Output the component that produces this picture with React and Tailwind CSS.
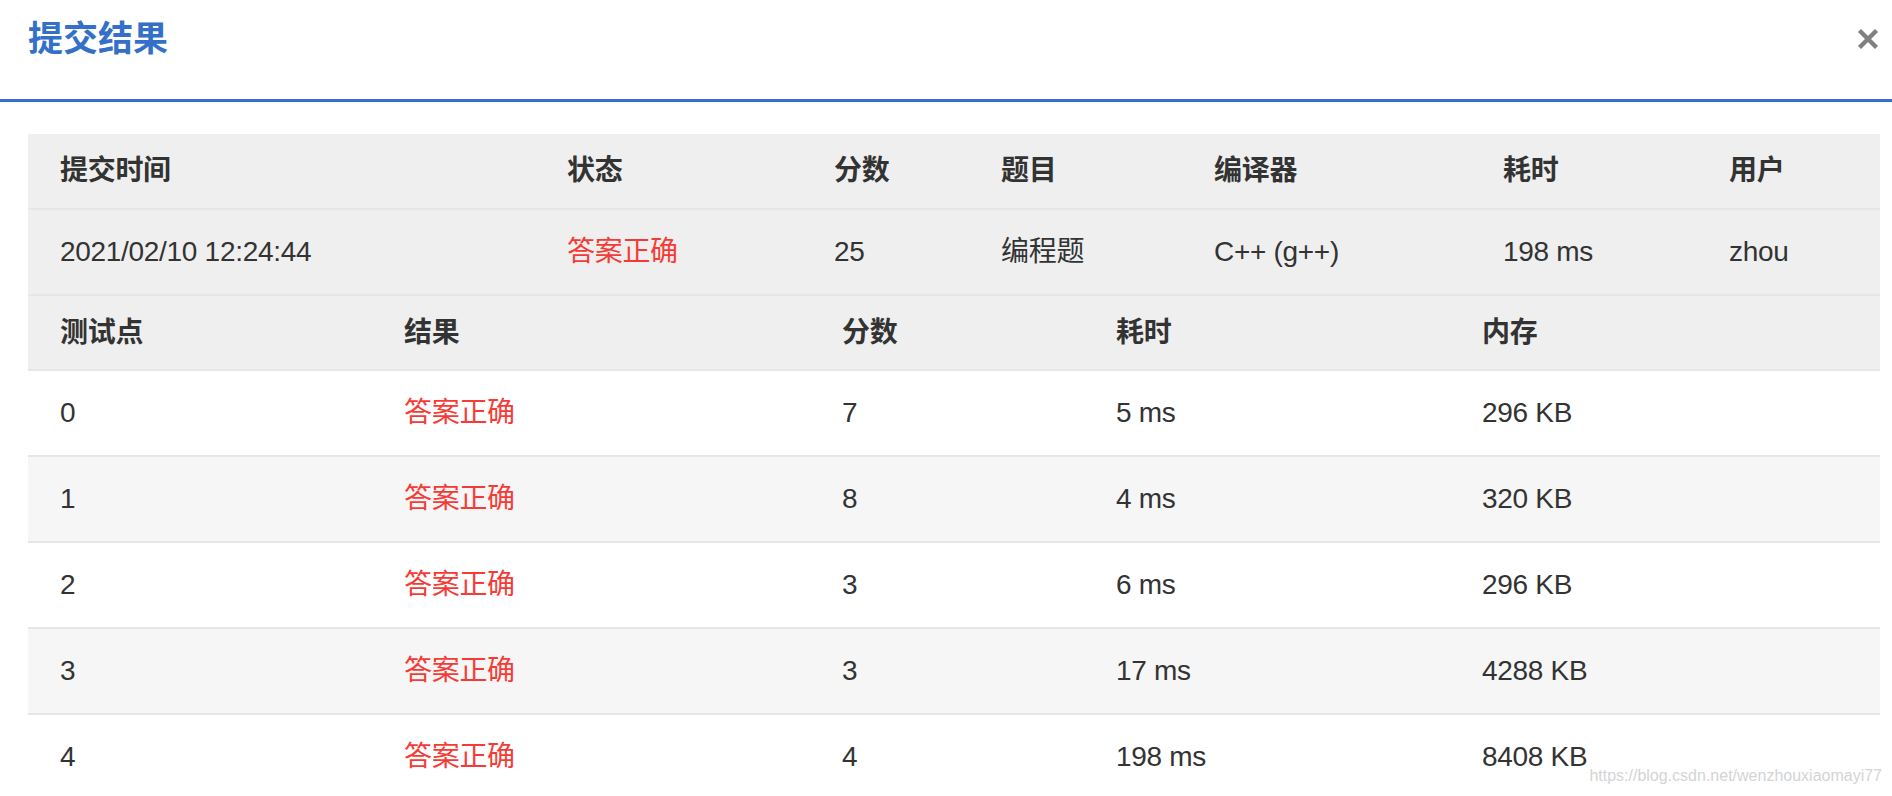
const summary = {
  submittedAt: '2021/02/10 12:24:44',
  status: '答案正确',
  score: 25,
  problem: '编程题',
  compiler: 'C++ (g++)',
  time: '198 ms',
  user: 'zhou',
};

const cases = [
  { id: 0, result: '答案正确', score: 7, time: '5 ms', memory: '296 KB' },
  { id: 1, result: '答案正确', score: 8, time: '4 ms', memory: '320 KB' },
  { id: 2, result: '答案正确', score: 3, time: '6 ms', memory: '296 KB' },
  { id: 3, result: '答案正确', score: 3, time: '17 ms', memory: '4288 KB' },
  { id: 4, result: '答案正确', score: 4, time: '198 ms', memory: '8408 KB' },
];

const topCols = 'grid grid-cols-[507px_267px_167px_213px_289px_226px_1fr] items-center';
const caseCols = 'grid grid-cols-[344px_438px_274px_366px_1fr] items-center';

const App = () => {
  return (
    <div
      className="relative h-[796px] overflow-hidden bg-white text-[#333]"
      style={{ fontFamily: '"Liberation Sans", "Noto Sans CJK SC", sans-serif' }}
    >
      {/* Header */}
      <div className="flex h-[99px] items-start justify-between pl-[28px] pr-[13px]">
        <h1 className="pt-[21px] text-[35px] font-bold leading-[35px] text-[#3470c8]">提交结果</h1>
        <button className="mt-[28px] text-[#808080]" aria-label="关闭">
          <svg width="22" height="22" viewBox="0 0 22 22">
            <path d="M2.5 2.5 L19.5 19.5 M19.5 2.5 L2.5 19.5" stroke="currentColor" strokeWidth="4.5" />
          </svg>
        </button>
      </div>
      <div className="h-[3px] bg-[#3470c8]" />

      {/* Result table */}
      <div className="ml-[28px] mt-[32px] w-[1852px] text-[28px] leading-[28px] tracking-[-0.3px]">
        <div className={`${topCols} h-[76px] border-b-2 border-[#e6e6e6] bg-[#efefef] font-bold`}>
          <div className="pl-[32px]">提交时间</div>
          <div className="pl-[32px]">状态</div>
          <div className="pl-[32px]">分数</div>
          <div className="pl-[32px]">题目</div>
          <div className="pl-[32px]">编译器</div>
          <div className="pl-[32px]">耗时</div>
          <div className="pl-[32px]">用户</div>
        </div>
        <div className={`${topCols} h-[86px] border-b-2 border-[#e6e6e6] bg-[#efefef]`}>
          <div className="pl-[32px]">{summary.submittedAt}</div>
          <div className="pl-[32px] text-[#f53b36]">{summary.status}</div>
          <div className="pl-[32px]">{summary.score}</div>
          <div className="pl-[32px]">{summary.problem}</div>
          <div className="pl-[32px]">{summary.compiler}</div>
          <div className="pl-[32px]">{summary.time}</div>
          <div className="pl-[32px]">{summary.user}</div>
        </div>
        <div className={`${caseCols} h-[75px] border-b-2 border-[#e6e6e6] bg-[#efefef] font-bold`}>
          <div className="pl-[32px]">测试点</div>
          <div className="pl-[32px]">结果</div>
          <div className="pl-[32px]">分数</div>
          <div className="pl-[32px]">耗时</div>
          <div className="pl-[32px]">内存</div>
        </div>
        {cases.map((c, i) => (
          <div
            key={c.id}
            className={`${caseCols} h-[86px] border-b-2 border-[#e6e6e6] ${i % 2 === 1 ? 'bg-[#f6f6f6]' : 'bg-white'}`}
          >
            <div className="pl-[32px]">{c.id}</div>
            <div className="pl-[32px] text-[#f53b36]">{c.result}</div>
            <div className="pl-[32px]">{c.score}</div>
            <div className="pl-[32px]">{c.time}</div>
            <div className="pl-[32px]">{c.memory}</div>
          </div>
        ))}
      </div>

      {/* watermark */}
      <div className="absolute right-[10px] top-[768px] text-[16px] leading-[16px] text-[#d4d4d4]">
        https://blog.csdn.net/wenzhouxiaomayi77
      </div>
    </div>
  );
};

export default App;
